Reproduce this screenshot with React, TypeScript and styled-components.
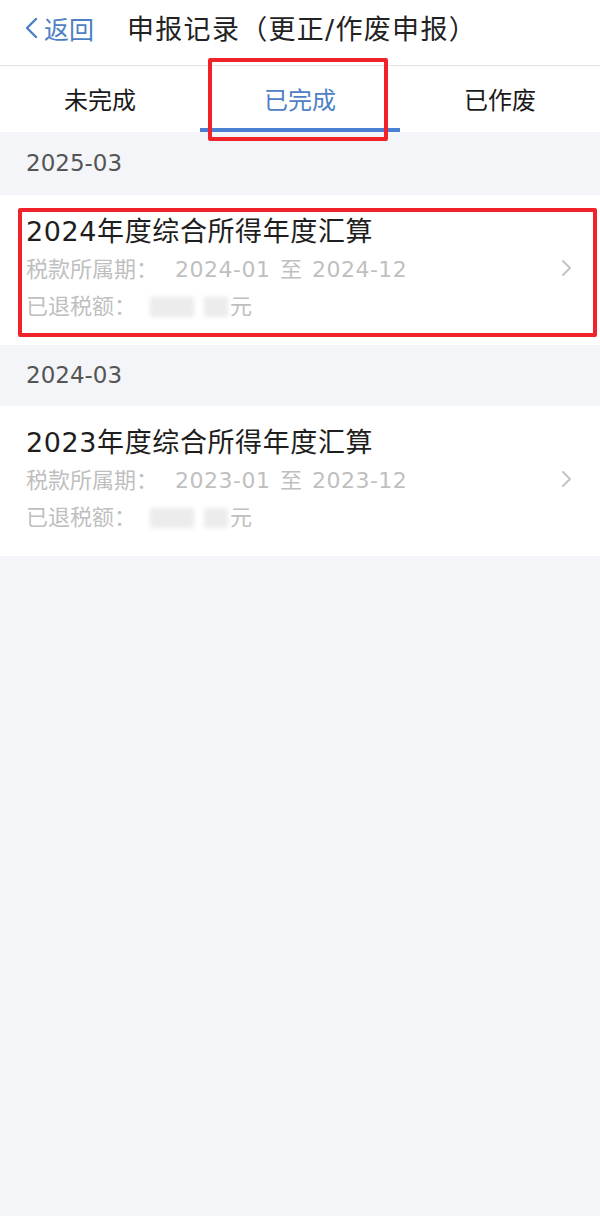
import React from 'react';
import styled, { createGlobalStyle } from 'styled-components';

type Tab = { label: string; active?: boolean; marked?: boolean };
type Record = {
  month: string;
  title: string;
  from: string;
  to: string;
  marked?: boolean;
};

const tabs: Tab[] = [
  { label: '未完成' },
  { label: '已完成', active: true, marked: true },
  { label: '已作废' },
];

const records: Record[] = [
  { month: '2025-03', title: '2024年度综合所得年度汇算', from: '2024-01', to: '2024-12', marked: true },
  { month: '2024-03', title: '2023年度综合所得年度汇算', from: '2023-01', to: '2023-12' },
];

const GlobalStyle = createGlobalStyle`
  html, body {
    margin: 0;
    padding: 0;
    background: #f4f5f9;
  }
  body {
    font-family: "DejaVu Sans", "Noto Sans CJK SC", sans-serif;
  }
`;

const Page = styled.div`
  width: 600px;
  min-height: 1216px;
  background: #f4f5f9;
`;

const Header = styled.div`
  height: 65px;
  background: #fff;
  display: flex;
  align-items: center;
  padding: 0 0 0 23px;
  border-bottom: 1px solid #e3e3e6;
`;

const Back = styled.div`
  display: flex;
  align-items: center;
  gap: 5px;
  color: #4d7fc4;
  font-size: 25px;
  width: 104px;
  margin-top: -10px;
`;

const Title = styled.div`
  font-size: 27px;
  letter-spacing: 1.3px;
  color: #222;
  margin-top: -10px;
`;

const TabBar = styled.div`
  height: 66px;
  background: #fff;
  display: grid;
  grid-template-columns: repeat(3, 1fr);
`;

const TabItem = styled.div<{ $active?: boolean }>`
  position: relative;
  display: flex;
  align-items: center;
  justify-content: center;
  font-size: 24px;
  color: ${({ $active }) => ($active ? '#4d80c6' : '#1a1a1a')};
  padding-bottom: 2px;

  &::after {
    content: '';
    display: ${({ $active }) => ($active ? 'block' : 'none')};
    position: absolute;
    left: 0;
    right: 0;
    bottom: 0;
    height: 4px;
    background: #4a7fd4;
  }
`;

const Mark = styled.div`
  position: absolute;
  border: 4px solid #f0232b;
  border-radius: 2px;
  pointer-events: none;
`;

const TabMark = styled(Mark)`
  left: 8px;
  right: 12px;
  top: -8px;
  bottom: -9px;
  z-index: 2;
`;

const Month = styled.div<{ $h: number }>`
  height: ${({ $h }) => $h}px;
  display: flex;
  align-items: center;
  padding-left: 26px;
  font-size: 23px;
  color: #555;
  box-sizing: border-box;
  padding-bottom: 2px;
`;

const Card = styled.div`
  position: relative;
  background: #fff;
  height: 150px;
  box-sizing: border-box;
  padding: 0 26px;
  display: flex;
  align-items: center;
`;

const CardMark = styled(Mark)`
  left: 18px;
  right: 3px;
  top: 13px;
  bottom: 8px;
`;

const CardBody = styled.div`
  flex: 1;
  display: flex;
  flex-direction: column;
  align-self: flex-start;
  padding-top: 18px;
`;

const CardTitle = styled.div`
  font-size: 27px;
  letter-spacing: 0.6px;
  color: #1e1e1e;
  line-height: 38px;
`;

const Line = styled.div`
  font-size: 22px;
  color: #bfbfbf;
  line-height: 37px;
  display: flex;
  align-items: center;
`;

const Period = styled.span`
  margin-left: 17px;
  letter-spacing: 0.5px;
  word-spacing: 2px;
`;

const Blurred = styled.span`
  display: inline-flex;
  gap: 10px;
  margin: 0 2px 0 14px;
  filter: blur(2px);

  span {
    display: inline-block;
    height: 20px;
    background: #ececec;
  }
`;

const Chevron = styled.div`
  display: flex;
  align-items: center;
  margin: -4px 0 0 0;
`;

const ChevronIcon = () => (
  <svg width="14" height="20" viewBox="0 0 14 20" fill="none">
    <path d="M3 3 L10 10 L3 17" stroke="#c4c4c4" strokeWidth="2" strokeLinecap="round" strokeLinejoin="round" />
  </svg>
);

const BackIcon = () => (
  <svg width="16" height="24" viewBox="0 0 16 24" fill="none">
    <path d="M13 3 L4 12 L13 21" stroke="#4d7fc4" strokeWidth="2.4" strokeLinecap="round" strokeLinejoin="round" />
  </svg>
);

const App: React.FC = () => (
  <Page>
    <GlobalStyle />
    <Header>
      <Back>
        <BackIcon />
        返回
      </Back>
      <Title>申报记录（更正/作废申报）</Title>
    </Header>
    <TabBar>
      {tabs.map((tab) => (
        <TabItem key={tab.label} $active={tab.active}>
          {tab.label}
          {tab.marked && <TabMark />}
        </TabItem>
      ))}
    </TabBar>
    {records.map((rec, i) => (
      <React.Fragment key={rec.month}>
        <Month $h={i === 0 ? 63 : 61}>{rec.month}</Month>
        <Card>
          {rec.marked && <CardMark />}
          <CardBody>
            <CardTitle>{rec.title}</CardTitle>
            <Line>
              税款所属期：
              <Period>
                {rec.from} 至 {rec.to}
              </Period>
            </Line>
            <Line>
              已退税额：
              <Blurred>
                <span style={{ width: 44 }} />
                <span style={{ width: 24 }} />
              </Blurred>
              元
            </Line>
          </CardBody>
          <Chevron>
            <ChevronIcon />
          </Chevron>
        </Card>
      </React.Fragment>
    ))}
  </Page>
);

export default App;
